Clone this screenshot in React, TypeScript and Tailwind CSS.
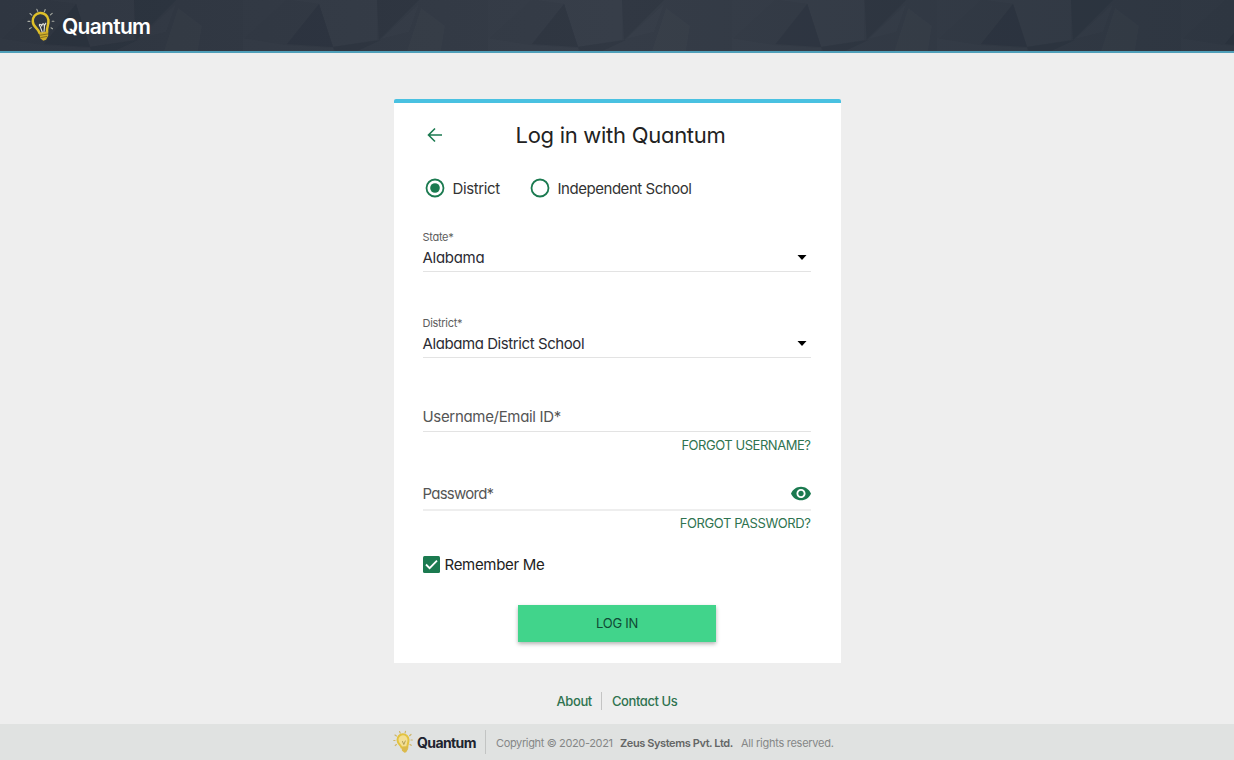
function Bulb({ className }: { className: string }) {
  return (
    <svg viewBox="0 0 28 34" className={className} fill="none" strokeLinecap="round">
      <path d="M12.500 25C11.500 20.500 5.800 19 5.800 13.500a7.700 7.700 0 0 1 15.600-1.500C22 17 19.300 19.500 20 24" stroke="#dfc02a" strokeWidth="2.500" />
      <path d="M12.200 24.500l9-1.200v4.500l-2.200 4-2.800.9-3-2.500z" fill="#cfae2a" />
      <path d="M13 27.200l7.500-1.200M13.600 29.600l6-1.100" stroke="#75621c" strokeWidth=".8" />
      <path d="M15.200 24l-2-5.500c-2.500-2.500 1-3.500 1.500 0 0-3.500 3.500-3.500 2.300 0l1.800-3.300M17 23.500l.5-5" stroke="#e6e5dc" strokeWidth="1.100" />
      <path d="M9.800 1.200l1 2.300M18.200 1.500l-.8 2.200M3 5.500l1.800 1.700M25.200 5.300l-1.800 1.500M1 13.400h1.800M25.200 13.200h1.700M2.500 20.800l1.800-1.200M24 19.800l1.500 1" stroke="#a9aca4" strokeWidth="1.100" />
    </svg>
  );
}

function FooterBulb() {
  return (
    <svg viewBox="0 0 20 24" className="h-6 w-5" fill="none" strokeLinecap="round">
      <path d="M8.500 17.500C8 15 4.500 14 4.500 10a5.500 5.500 0 0 1 11-.5c.2 3.500-1.300 5-1.200 8z" fill="#f3df94" stroke="#e3c340" strokeWidth="2" />
      <path d="M8.500 17l6.300-.7v3.200l-1.600 2.800-1.700.4-2.500-2z" fill="#dbba4b" />
      <path d="M9.500 11.500l1.300 3 1.500-3.500" stroke="#a79550" strokeWidth=".9" />
      <path d="M6.500 1.500l.7 1.600M12.500 1.300l-.4 1.600M2 5l1.400 1M18 4.500l-1.400 1.200M.8 10.500h1.200M18 10h1.300M2.200 15.500l1.200-.9M17 14.500l1.200.8" stroke="#cfb66a" strokeWidth="1.200" />
    </svg>
  );
}

function Facets({ x, scale = 1 }: { x: number; scale?: number }) {
  return (
    <g transform={`translate(${x} 0) scale(${scale} 1)`}>
      <path d="M0 0h44L0 40z" fill="#fff" opacity=".006" />
      <path d="M44 44 76 4l14 43z" fill="#0f1826" opacity=".13" />
      <path d="M76 4 90 47l44-7V0H46z" fill="#fff" opacity=".01" />
      <path d="M134 0h42l-40 40z" fill="#0f1826" opacity=".09" />
      <path d="M176 4 138 39l28-7z" fill="#fff" opacity=".012" />
      <path d="M178 8l24 18-4 25h-34z" fill="#fff" opacity=".014" />
      <path d="M90 47l48-7-24 11H92z" fill="#0f1826" opacity=".09" />
      <path d="M0 38l44 7 46 3v3H0z" fill="#fff" opacity=".01" />
    </g>
  );
}

function Select({ label, value, className, labelClass, valueClass }: { label: string; value: string; className: string; labelClass: string; valueClass: string }) {
  return (
    <div className={className}>
      <div className="flex h-[18px] items-center text-[11px] text-[#5d5d5d]"><span className={labelClass}>{label}</span></div>
      <div className="flex h-[26px] items-center justify-between border-b border-[#e3e3e3] pb-px text-[15px] text-[#2b2b33]">
        <span className={valueClass}>{value}</span>
        <svg viewBox="0 0 10 5" className="mr-1 mb-[2px] h-[5px] w-[10px]"><path d="M.5 0h9L5 5z" fill="#000" /></svg>
      </div>
    </div>
  );
}

export default function App() {
  return (
    <div className="flex h-[760px] w-[1234px] flex-col bg-[#eeeeee] font-['Inter',sans-serif] whitespace-nowrap [font-feature-settings:'cv11']">
      <header className="relative h-[53px] shrink-0 border-b-2 border-[#4f9fb9] bg-linear-to-r from-[#2e3540] via-[#353c47] to-[#2e3641]">
        <svg viewBox="0 0 1234 51" className="absolute inset-0 h-[51px] w-full" preserveAspectRatio="none">
          <Facets x={0} />
          <Facets x={243} />
          <Facets x={488} />
          <Facets x={732} scale={0.99} />
          <Facets x={937} />
          <Facets x={1181} />
        </svg>
        <div className="relative flex h-full items-center pl-[27px]">
          <Bulb className="mb-[2px] h-[34px] w-7" />
          <span className="ml-[7px] pt-[2px] text-[21px] font-semibold tracking-[-0.7px] text-white [font-feature-settings:normal]">Quantum</span>
        </div>
      </header>
      <main className="flex flex-1 flex-col items-center pt-[46px]">
        <section className="h-[564px] w-[447px] rounded-t-[2px] border-t-4 border-[#49c1e1] bg-white pr-[30px] pl-[29px]">
          <div className="relative flex h-16 items-center justify-center">
            <svg viewBox="0 0 16 16" className="absolute left-1 mb-px h-4 w-4" fill="none" stroke="#1b7a50" strokeWidth="1.600"><path d="M15 8H2M8 1.500 1.500 8 8 14.500" /></svg>
            <span className="ml-[8px] text-[22px] tracking-[-0.28px] text-[#222]">Log in with Quantum</span>
          </div>
          <div className="flex h-[43px] items-center text-[15px] text-[#333]">
            <svg viewBox="0 0 20 20" className="mb-px ml-[2px] h-5 w-5"><circle cx="10" cy="10" r="8.500" fill="none" stroke="#1b7a50" strokeWidth="1.800" /><circle cx="10" cy="10" r="4.800" fill="#1b7a50" /></svg>
            <span className="ml-[8px] w-[77px] pt-px tracking-[-0.37px]">District</span>
            <svg viewBox="0 0 20 20" className="mb-px h-5 w-5"><circle cx="10" cy="10" r="8.500" fill="none" stroke="#1b7a50" strokeWidth="1.800" /></svg>
            <span className="ml-[8px] pt-px tracking-[-0.46px]">Independent School</span>
          </div>
          <Select label="State*" value="Alabama" className="mt-[18px]" labelClass="tracking-[-0.3px]" valueClass="tracking-[-0.3px]" />
          <Select label="District*" value="Alabama District School" className="mt-[42px]" labelClass="tracking-[-0.3px]" valueClass="tracking-[-0.42px]" />
          <div className="mt-11 flex h-[30px] items-center border-b border-[#e3e3e3] pt-[2px] text-[15px] text-[#555]">
            <span className="tracking-[-0.32px]">Username/Email ID*</span>
          </div>
          <div className="flex h-[26px] items-center justify-end text-[13px] text-[#2f7350]">
            <span className="pt-px tracking-[-0.46px]">FORGOT USERNAME?</span>
          </div>
          <div className="mt-[21px] flex h-8 items-center justify-between border-b-2 border-[#eeeeee] text-[15px] text-[#555]">
            <span className="tracking-[-0.75px]">Password*</span>
            <svg viewBox="1 4 22 16" className="mb-px h-[15px] w-5"><path fill="#1b7a50" d="M12 4.500C7 4.500 2.730 7.610 1 12c1.730 4.390 6 7.500 11 7.500s9.270-3.110 11-7.500c-1.730-4.390-6-7.500-11-7.500zM12 17c-2.760 0-5-2.240-5-5s2.240-5 5-5 5 2.240 5 5-2.240 5-5 5zm0-8c-1.660 0-3 1.340-3 3s1.340 3 3 3 3-1.340 3-3-1.340-3-3-3z" /></svg>
          </div>
          <div className="flex h-[25px] items-center justify-end text-[13px] text-[#2f7350]">
            <span className="tracking-[-0.42px]">FORGOT PASSWORD?</span>
          </div>
          <div className="mt-4 flex h-[26px] items-center text-[15px] text-[#222]">
            <svg viewBox="0 0 17 17" className="mb-[2px] h-[17px] w-[17px]"><rect width="17" height="17" rx="1.500" fill="#1b7a50" /><path d="M3 8.500l3.600 3.700 7.400-7.600" fill="none" stroke="#fff" strokeWidth="1.800" /></svg>
            <span className="ml-[5px] tracking-[-0.3px]">Remember Me</span>
          </div>
          <button className="mx-auto mt-[26.500px] flex h-[37px] w-[198px] items-center justify-center bg-[#41d48b] text-[13px] text-[#104a35] shadow-[0_2px_4px_rgba(0,0,0,0.3)]">
            <span className="pt-px pl-px tracking-[-0.25px]">LOG IN</span>
          </button>
        </section>
        <nav className="mt-[29px] flex h-[18px] items-center text-[13px] font-medium text-[#2f7350]">
          <span className="pt-[2px] tracking-[-0.4px]">About</span>
          <i className="mr-[10px] ml-[9px] h-[18px] w-px bg-[#c4c4c4]" />
          <span className="pt-[2px] tracking-[-0.4px]">Contact Us</span>
        </nav>
      </main>
      <footer className="flex h-9 shrink-0 items-center bg-[#e0e2e1] pl-[393px] text-[11px] text-[#858787]">
        <FooterBulb />
        <span className="ml-1 w-[68px] text-[14px] font-bold tracking-[-0.6px] text-[#20242f] [font-feature-settings:normal]">Quantum</span>
        <i className="mr-[10px] h-6 w-px bg-[#c2c4c3]" />
        <span className="w-[124px] pt-[2px] tracking-[-0.36px]">Copyright © 2020-2021</span>
        <span className="w-[121px] pt-[2px] font-semibold tracking-[-0.4px] text-[#646666]">Zeus Systems Pvt. Ltd.</span>
        <span className="pt-[2px] tracking-[-0.26px]">All rights reserved.</span>
      </footer>
    </div>
  );
}
